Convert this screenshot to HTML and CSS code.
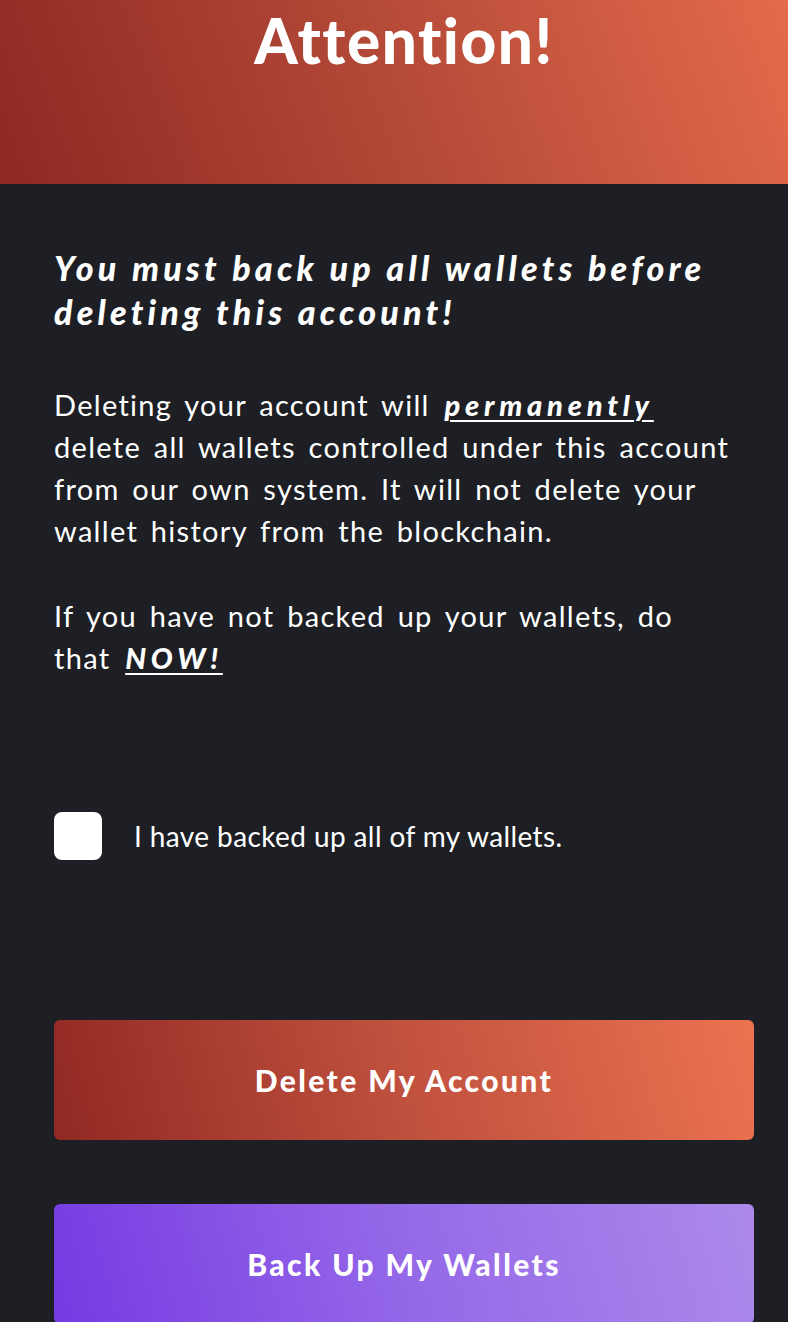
FILE: index.html
```html
<!DOCTYPE html>
<html lang="en">
<head>
  <meta charset="UTF-8" />
  <meta name="viewport" content="width=device-width, initial-scale=1" />
  <title>Delete Account</title>
  <link rel="stylesheet" href="styles.css">
</head>
<body>

  <div class="page">
    <header class="banner">
      <h1>Attention!</h1>
    </header>

    <main class="content">
      <h2 class="warning">You must back up all wallets before deleting this account!</h2>

      <p class="notice">Deleting your account will <em>permanently</em> delete all wallets controlled under this account from our own system. It will not delete your wallet history from the blockchain.</p>

      <p class="notice">If you have not backed up your wallets, do that <em>NOW!</em></p>

      <label class="confirm">
        <input type="checkbox" />
        <span class="box"></span>
        <span>I have backed up all of my wallets.</span>
      </label>

      <div class="actions">
        <button type="button" class="btn btn-danger">Delete My Account</button>
        <button type="button" class="btn btn-backup">Back Up My Wallets</button>
      </div>
    </main>
  </div>

</body>
</html>
```

FILE: styles.css
```css
/* Reset & Base */
* { box-sizing: border-box; margin: 0; padding: 0; }
body {
  font-family: Lato, 'Noto Sans', sans-serif;
  background: #1d1f25;
  color: #fff;
  overflow: hidden;
}
.page {
  width: 808px;
}

/* Banner */
.banner {
  height: 184px;
  background: linear-gradient(70deg, #8d2822 0%, #b54a38 50%, #e66c4d 100%);
  text-align: center;
}
.banner h1 {
  font-size: 62px;
  font-weight: 900;
  line-height: 1;
  padding-top: 9px;
  letter-spacing: 1.5px;
}

/* Content */
.content {
  padding: 62px 54px 0;
}
.warning {
  font-size: 34px;
  font-weight: 900;
  font-style: italic;
  line-height: 44px;
  letter-spacing: 4.2px;
  margin-bottom: 50px;
}
.notice {
  max-width: 680px;
  font-size: 29px;
  line-height: 42px;
  letter-spacing: 1.3px;
  word-spacing: 4px;
  margin-bottom: 43px;
}
.notice em {
  font-weight: 900;
  letter-spacing: 4.8px;
  word-spacing: 0;
  margin-left: 2px;
  text-decoration: underline;
  text-decoration-thickness: 2px;
  text-underline-offset: 4px;
}

/* Checkbox */
.confirm {
  display: flex;
  align-items: center;
  gap: 32px;
  margin-top: 133px;
  font-size: 28px;
  letter-spacing: 0.4px;
  cursor: pointer;
}
.confirm input { display: none; }
.confirm .box {
  width: 48px;
  height: 48px;
  background: #fff;
  border-radius: 8px;
  flex-shrink: 0;
}

/* Buttons */
.actions {
  display: flex;
  flex-direction: column;
  gap: 64px;
  margin-top: 160px;
}
.btn {
  width: 100%;
  height: 120px;
  border: none;
  border-radius: 6px;
  color: #fff;
  font-family: inherit;
  font-size: 30px;
  font-weight: 900;
  letter-spacing: 2.4px;
  cursor: pointer;
}
.btn-danger {
  background: linear-gradient(75deg, #902923 0%, #c0513e 50%, #eb7350 100%);
}
.btn-backup {
  background: linear-gradient(75deg, #763ae2 0%, #9568e8 50%, #ad89ea 100%);
}
```
